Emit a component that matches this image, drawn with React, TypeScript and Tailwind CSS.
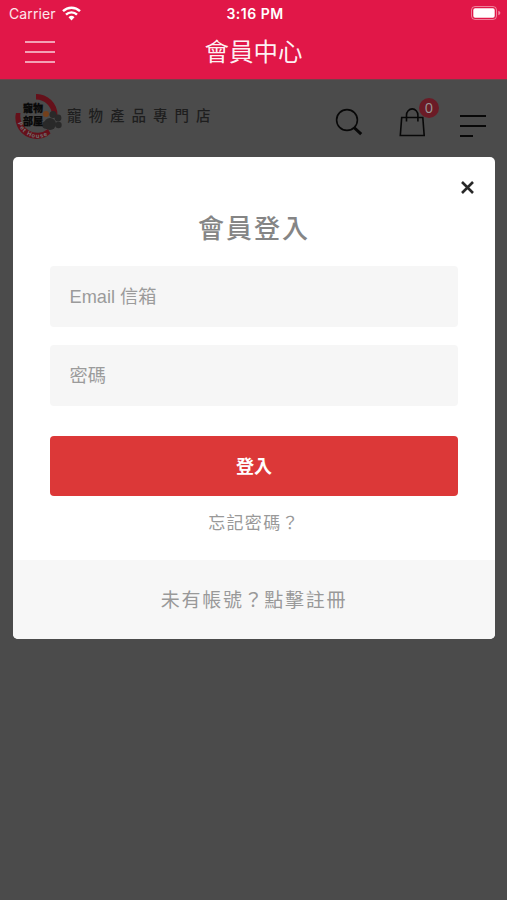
import type { ReactNode } from "react";

const StatusBar = () => (
  <div className="grid h-[27px] grid-cols-3 items-center pl-[9px] pr-[6px] text-white">
    <div className="flex items-center gap-[6px]">
      <span className="pt-px text-[14px] leading-none tracking-[0.1px] text-white/90">Carrier</span>
      <svg className="mb-px" width="19" height="15" viewBox="0 0 19 15" fill="none" stroke="currentColor" strokeWidth="2.4">
        <path d="M1 5.2a12.2 12.2 0 0 1 17 0" />
        <path d="M4 8.6a7.8 7.8 0 0 1 11 0" />
        <path d="M9.5 14.4 6.5 11.3a4.3 4.3 0 0 1 6 0Z" fill="currentColor" stroke="none" />
      </svg>
    </div>
    <span className="pt-px text-center text-[14px] font-semibold leading-none tracking-[0.5px]">3:16 PM</span>
    <svg className="mb-px justify-self-end" width="30" height="14" viewBox="0 0 30 14" fill="none">
      <rect x="0.5" y="0.5" width="25" height="13" rx="3.5" stroke="white" strokeOpacity="0.45" />
      <rect x="2.3" y="2.3" width="21.4" height="9.4" rx="1.8" fill="white" />
      <path d="M27.3 4.8c1.6.6 2 1.4 2 2.2s-.4 1.6-2 2.2Z" fill="white" fillOpacity="0.5" />
    </svg>
  </div>
);

const NavBar = () => (
  <div className="grid h-[52px] grid-cols-[55px_1fr_55px] items-center">
    <button aria-label="選單" className="flex flex-col gap-2 pb-[2px] pl-[25px]">
      <span className="h-[2px] w-[30px] bg-white/60" />
      <span className="h-[2px] w-[30px] bg-white/60" />
      <span className="h-[2px] w-[30px] bg-white/60" />
    </button>
    <h1 className="pb-px text-center text-[24.5px] font-normal leading-none text-white/95">會員中心</h1>
  </div>
);

const Logo = () => (
  <svg width="48" height="46" viewBox="0 0 48 46">
    <path d="M21 0A21 21 0 0 1 42.5 21H37A16 16 0 0 0 21 5.5Z" fill="#65101a" />
    <path d="M1 19H5.5A17 17 0 0 0 33 35L35.5 39.5A21 21 0 0 1 1 19Z" fill="#65101a" />
    <path id="logo-arc" d="M3 29A20 20 0 0 0 37 37.5" fill="none" />
    <text fontSize="5.8" fontWeight="700" fill="#707070" letterSpacing="1">
      <textPath href="#logo-arc">Pet House</textPath>
    </text>
    <circle cx="31" cy="20" r="3" fill="#73401c" />
    <g fill="#292929">
      <circle cx="35" cy="30" r="6" />
      <circle cx="38" cy="20.5" r="3.5" />
      <circle cx="43" cy="24" r="3.4" />
      <circle cx="43.5" cy="31" r="3.2" />
      <circle cx="31" cy="31" r="3.8" />
    </g>
    <g fontSize="10" fontWeight="900" fill="#080808" stroke="#080808" strokeWidth="0.25">
      <text x="8" y="17.5">寵物</text>
      <text x="8" y="31">部屋</text>
    </g>
  </svg>
);

const StoreHeader = () => (
  <header className="flex h-[78px] items-start border-t border-[#74404a] pl-[15px] pr-[21px]">
    <div className="mt-[14px] flex">
      <Logo />
      <span className="ml-1 mt-[15px] whitespace-nowrap text-[14.5px] font-medium leading-none tracking-[7px] text-[#1e1e1e]">
        寵物產品專門店
      </span>
    </div>
    <div className="ml-auto mt-[18px] flex items-start text-[#080808]">
      <svg className="mt-[10px]" width="28" height="28" viewBox="0 0 28 28" fill="none" stroke="currentColor">
        <circle cx="12" cy="12" r="10.4" strokeWidth="1.6" />
        <path d="m19 19.5 7.2 6.7" strokeWidth="3" />
      </svg>
      <div className="relative ml-9">
        <svg className="mt-[9px]" width="26" height="30" viewBox="0 0 26 30" fill="none" stroke="currentColor" strokeWidth="1.6">
          <path d="M2.7 10.5h21.1l1.4 18H1.3ZM7.5 14.5V8.2a5.7 6.3 0 0 1 11.4 0v6.3" />
        </svg>
        <span className="absolute left-[20px] top-0 flex size-5 items-center justify-center rounded-full bg-[#6b1b26] font-['Open_Sans',sans-serif] text-[14.5px] leading-none text-[#999]">
          0
        </span>
      </div>
      <div className="ml-[35px] mt-[17px] flex flex-col gap-2">
        <span className="h-[2px] w-[26px] bg-current" />
        <span className="h-[2px] w-[26px] bg-current" />
        <span className="h-[2px] w-[13px] bg-current" />
      </div>
    </div>
  </header>
);

const Field = ({ type, placeholder }: { type: string; placeholder: string }) => (
  <input
    type={type}
    placeholder={placeholder}
    className="h-[61px] w-full rounded-[4px] bg-[#f6f6f6] px-[19.5px] pt-[2px] text-[18.2px] outline-none placeholder:text-[#9b9b9b]"
  />
);

const Modal = ({ children }: { children: ReactNode }) => (
  <div role="dialog" className="mx-[13px] h-[482px] w-[482px] overflow-hidden rounded-[5px] bg-white">
    {children}
  </div>
);

const LoginModal = () => (
  <Modal>
    <div className="flex h-[403px] flex-col px-[37px]">
      <button aria-label="關閉" className="-mr-[16px] mt-6 self-end">
        <svg width="13" height="13" viewBox="0 0 13 13" fill="none" stroke="#282828" strokeWidth="2.6">
          <path d="m1 1 11 11M12 1 1 12" />
        </svg>
      </button>
      <h2 className="mt-[19px] text-center text-[26px] font-medium leading-8 tracking-[2px] text-[#858585]">會員登入</h2>
      <div className="mt-[21px] flex flex-col gap-[18px]">
        <Field type="email" placeholder="Email 信箱" />
        <Field type="password" placeholder="密碼" />
      </div>
      <button className="mt-[30px] h-[60px] shrink-0 rounded-[4px] bg-[#dc3838] pt-[3px] text-[18px] font-bold text-white">
        登入
      </button>
      <a className="mt-4 text-center text-[17px] leading-6 tracking-[1.3px] text-[#999]">忘記密碼？</a>
    </div>
    <div className="flex h-[79px] items-center justify-center bg-[#f7f7f7] pt-[3px] text-[19px] tracking-[1.7px] text-[#999]">
      未有帳號？點擊註冊
    </div>
  </Modal>
);

const App = () => {
  return (
    <main className="h-[900px] w-[507px] overflow-hidden bg-[#4b4b4b] font-['Inter','Noto_Sans_CJK_TC',sans-serif]">
      <div className="bg-[#e11748]">
        <StatusBar />
        <NavBar />
      </div>
      <StoreHeader />
      <div className="font-['Liberation_Sans','Noto_Sans_CJK_TC',sans-serif]">
        <LoginModal />
      </div>
    </main>
  );
};

export default App;
